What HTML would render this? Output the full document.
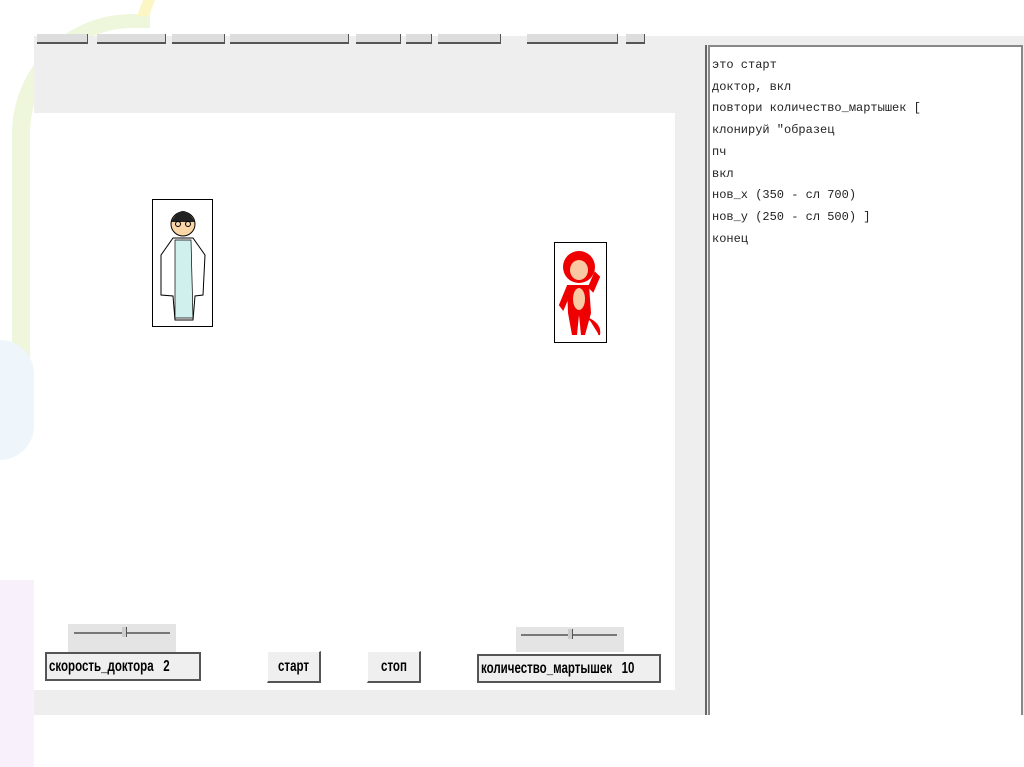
<!DOCTYPE html>
<html><head><meta charset="utf-8"><style>
body{margin:0;width:1024px;height:767px;position:relative;overflow:hidden;background:#fff;font-family:"Liberation Sans",sans-serif}
.a{position:absolute}
.btn{position:absolute;background:#efefef;border:1px solid #fff;border-right:2px solid #555;border-bottom:2px solid #555;font-size:16px;font-weight:bold;display:flex;align-items:center;box-sizing:border-box;overflow:hidden;white-space:nowrap}
.btn span{display:inline-block;transform:scaleX(.72);transform-origin:left center}
.c span{transform-origin:center}
.code{position:absolute;left:712px;top:55px;font-family:"Liberation Mono",monospace;font-size:12px;line-height:21.7px;color:#222}
.tb{position:absolute;top:34px;height:8px;background:#ddd;border-bottom:2px solid #555;border-right:1px solid #555}
</style></head><body>
<div class="a" style="left:12px;top:14px;width:120px;height:330px;border-left:18px solid #eef6dc;border-top:14px solid #eef6dc;border-radius:120px 0 0 0"></div>
<div class="a" style="left:0;top:340px;width:34px;height:120px;background:#eef6fc;border-radius:0 50px 50px 0"></div>
<div class="a" style="left:0;top:580px;width:34px;height:187px;background:#f8f0fb"></div>
<div class="a" style="left:140px;top:0;width:12px;height:16px;background:#fbf6c4;transform:skewX(-20deg)"></div>
<div class="a" style="left:34px;top:36px;width:990px;height:679px;background:#eeeeee"></div>
<div class="a" style="left:34px;top:113px;width:641px;height:577px;background:#fff"></div>
<div class="tb" style="left:37px;width:50px"></div>
<div class="tb" style="left:97px;width:68px"></div>
<div class="tb" style="left:172px;width:52px"></div>
<div class="tb" style="left:230px;width:118px"></div>
<div class="tb" style="left:356px;width:44px"></div>
<div class="tb" style="left:406px;width:25px"></div>
<div class="tb" style="left:438px;width:62px"></div>
<div class="tb" style="left:527px;width:90px"></div>
<div class="tb" style="left:626px;width:18px"></div>
<div class="a" style="left:705px;top:45px;width:2px;height:670px;background:#666"></div>
<div class="a" style="left:708px;top:45px;width:2px;height:670px;background:#888"></div>
<div class="a" style="left:710px;top:45px;width:311px;height:670px;background:#fff;border-top:2px solid #888"></div>
<div class="a" style="left:1021px;top:45px;width:2px;height:670px;background:#888"></div>
<div class="code">это старт<br>доктор, вкл<br>повтори количество_мартышек [<br>клонируй "образец<br>пч<br>вкл<br>нов_х (350 - сл 700)<br>нов_у (250 - сл 500) ]<br>конец</div>
<div class="a" style="left:152px;top:199px;width:61px;height:128px;border:1px solid #000;box-sizing:border-box;background:#fff">
<svg width="59" height="126" viewBox="0 0 59 126">
<circle cx="30" cy="24" r="12" fill="#fbd7a8" stroke="#000"/>
<path d="M18 22 Q30 0 42 22 Z" fill="#222"/>
<circle cx="25" cy="24" r="2.5" fill="none" stroke="#000"/><circle cx="35" cy="24" r="2.5" fill="none" stroke="#000"/>
<path d="M8 55 L20 38 L40 38 L52 55 L50 95 L42 96 L40 120 L22 120 L20 96 L8 95 Z" fill="#fff" stroke="#000"/>
<path d="M22 40 L38 40 L40 118 L22 118 Z" fill="#cff0ec" stroke="#000" stroke-width=".7"/>
</svg></div>
<div class="a" style="left:554px;top:242px;width:53px;height:101px;border:1px solid #000;box-sizing:border-box;background:#fff">
<svg width="51" height="99" viewBox="0 0 51 99">
<circle cx="24" cy="24" r="16" fill="#e00"/>
<ellipse cx="24" cy="27" rx="9" ry="10" fill="#f9c9a3"/>
<path d="M12 42 L34 42 L36 70 L30 92 L26 92 L24 72 L22 92 L17 92 L13 70 Z" fill="#e00"/>
<ellipse cx="24" cy="56" rx="6" ry="11" fill="#f9c9a3"/>
<path d="M12 45 L5 62 L8 66 L14 52 Z M34 44 L40 30 L44 34 L38 48 Z M34 76 Q46 82 44 92" fill="#e00" stroke="#e00" stroke-width="2"/>
</svg></div>
<div class="a" style="left:68px;top:624px;width:108px;height:28px;background:#e4e4e4"></div>
<div class="a" style="left:74px;top:632px;width:96px;height:2px;background:#777"></div>
<div class="a" style="left:122px;top:627px;width:4px;height:10px;background:#ccc;border-right:1px solid #555"></div>
<div class="a" style="left:516px;top:627px;width:108px;height:25px;background:#e4e4e4"></div>
<div class="a" style="left:521px;top:634px;width:96px;height:2px;background:#777"></div>
<div class="a" style="left:568px;top:629px;width:4px;height:10px;background:#ccc;border-right:1px solid #555"></div>
<div class="btn" style="left:45px;top:652px;width:156px;height:29px;padding-left:2px;border-left:2px solid #555;border-top:2px solid #555"><span>скорость_доктора&nbsp;&nbsp;&nbsp;2</span></div>
<div class="btn c" style="left:267px;top:651px;width:54px;height:32px;justify-content:center"><span>старт</span></div>
<div class="btn c" style="left:367px;top:651px;width:54px;height:32px;justify-content:center"><span>стоп</span></div>
<div class="btn" style="left:477px;top:654px;width:184px;height:29px;padding-left:2px;border-left:2px solid #555;border-top:2px solid #555"><span>количество_мартышек&nbsp;&nbsp;&nbsp;10</span></div>
</body></html>
